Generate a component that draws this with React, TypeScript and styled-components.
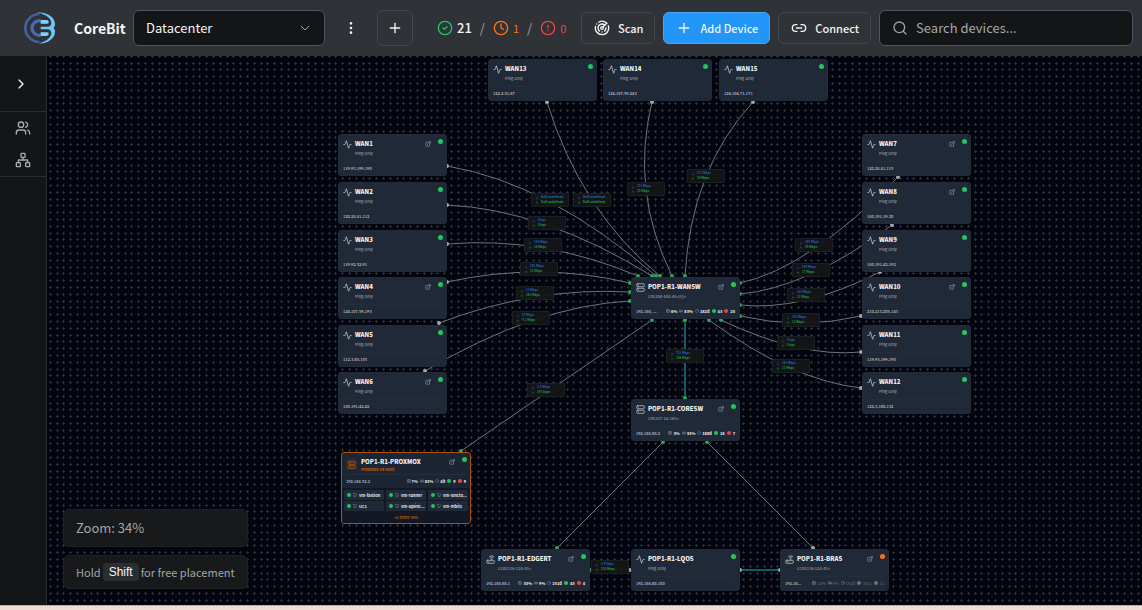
import React from 'react';
import styled, { createGlobalStyle, css } from 'styled-components';
import {
  Activity,
  ArrowDown,
  ArrowUp,
  ChevronDown,
  ChevronRight,
  CircleAlert,
  CircleCheck,
  Clock,
  Cpu,
  EllipsisVertical,
  ExternalLink,
  Link2,
  MemoryStick,
  Monitor,
  Network,
  Plus,
  Radar,
  Router,
  Search,
  Server,
  Users,
} from 'lucide-react';

const color = {
  bar: '#2f3237',
  panel: '#141517',
  line: '#42474d',
  field: '#4b5563',
  text: '#f4f4f5',
  muted: '#9ca3af',
  canvas: '#020510',
  card: '#1f2937',
  green: '#22c55e',
  orange: '#f97316',
  red: '#ef4444',
  blue: '#2196f8',
  down: '#2563c4',
  up: '#1b9e4b',
};

const GlobalStyle = createGlobalStyle`
  *, *::before, *::after { box-sizing: border-box; }
  body {
    margin: 0;
    background: #efdcd2;
    color: ${color.text};
    font-family: "Noto Sans CJK SC", "Noto Sans", sans-serif;
    font-size: 13px;
    line-height: 20px;
  }
  button, input, select { font: inherit; color: inherit; }
  p, h1, h2 { margin: 0; }
`;

/* ---------- page frame ---------- */

const Page = styled.div`
  display: flex;
  flex-direction: column;
  height: 100vh;
  padding-bottom: 4px;
`;

const TopBar = styled.header`
  display: flex;
  align-items: center;
  gap: 8px;
  height: 56px;
  flex: none;
  padding: 0 9px 0 24px;
  background: ${color.bar};
`;

const Brand = styled.div`
  display: flex;
  align-items: center;
  gap: 18px;
  width: 101px;
  flex: none;

  svg {
    flex: none;
  }
`;

const BrandName = styled.h1`
  font-size: 14px;
  line-height: 24px;
  font-weight: 700;
`;

const SelectBox = styled.label`
  display: flex;
  align-items: center;
  position: relative;
  width: 192px;
  height: 36px;
  flex: none;

  select {
    appearance: none;
    width: 100%;
    height: 100%;
    padding: 0 36px 0 12px;
    border: 1px solid ${color.field};
    border-radius: 6px;
    background: ${color.panel};
  }

  svg {
    position: absolute;
    right: 12px;
    color: ${color.muted};
    pointer-events: none;
  }
`;

const IconButton = styled.button<{ $outlined?: boolean }>`
  display: flex;
  align-items: center;
  justify-content: center;
  width: 36px;
  height: 36px;
  flex: none;
  padding: 0;
  border: 1px solid ${(p) => (p.$outlined ? color.line : 'transparent')};
  border-radius: 6px;
  background: transparent;
`;

const Counters = styled.div`
  display: flex;
  align-items: center;
  gap: 8px;
  width: 128px;
  margin: 0 8px 0 16px;
  flex: none;
  color: ${color.muted};
`;

const Counter = styled.span<{ $tone: string; $strong?: boolean }>`
  display: flex;
  align-items: center;
  gap: 4px;
  color: ${(p) => (p.$strong ? color.text : p.$tone)};
  font-size: ${(p) => (p.$strong ? 13 : 11)}px;
  font-weight: ${(p) => (p.$strong ? 500 : 400)};

  svg {
    color: ${(p) => p.$tone};
  }
`;

const ActionButton = styled.button<{ $primary?: boolean }>`
  display: flex;
  align-items: center;
  gap: 8px;
  height: 32px;
  flex: none;
  padding: 0 11px 0 12px;
  border: 1px solid ${(p) => (p.$primary ? '#48a9f9' : color.line)};
  border-radius: 6px;
  background: ${(p) => (p.$primary ? color.blue : 'transparent')};
  font-size: 11px;
  font-weight: 500;
`;

const SearchBox = styled.label`
  display: flex;
  align-items: center;
  gap: 8px;
  flex: 1;
  min-width: 0;
  height: 36px;
  padding: 0 12px;
  border: 1px solid ${color.field};
  border-radius: 6px;
  background: ${color.panel};
  color: ${color.muted};

  input {
    flex: 1;
    min-width: 0;
    padding: 0;
    border: 0;
    outline: 0;
    background: transparent;
  }
  input::placeholder {
    color: #a3a8ae;
    opacity: 1;
  }
`;

const Workspace = styled.div`
  display: flex;
  flex: 1;
  min-height: 0;
  border-bottom: 1px solid #b9aeab;
`;

const SideBar = styled.nav`
  display: flex;
  flex-direction: column;
  width: 47px;
  flex: none;
  border-right: 1px solid #2b2d30;
  background: ${color.panel};
`;

const SideGroup = styled.div`
  display: flex;
  flex-direction: column;
  align-items: center;
  border-bottom: 1px solid #2b2d30;
`;

const SideButton = styled.button<{ $tall?: boolean }>`
  display: flex;
  align-items: center;
  justify-content: center;
  width: 100%;
  height: ${(p) => (p.$tall ? 55 : 32)}px;
  padding: ${(p) => (p.$tall ? '0 5px 0 0' : 0)};
  border: 0;
  background: transparent;
  color: ${(p) => (p.$tall ? color.text : '#a9abae')};
`;

/* ---------- canvas ---------- */

const Canvas = styled.main`
  position: relative;
  flex: 1;
  min-width: 0;
  overflow: hidden;
  background: ${color.canvas};
`;

const Drawing = styled.svg`
  position: absolute;
  inset: 0;
  width: 100%;
  height: 100%;
`;

const Card = styled.article<{ $x: number; $y: number; $host?: boolean }>`
  position: absolute;
  left: ${(p) => p.$x}px;
  top: ${(p) => p.$y}px;
  display: flex;
  flex-direction: column;
  width: ${(p) => (p.$host ? 130 : 109)}px;
  border: 1px solid #232b36;
  border-radius: 3px;
  background: ${color.card};
  font-size: 4px;
  line-height: 6px;
  overflow: hidden;

  ${(p) =>
    p.$host &&
    css`
      border-color: #a8540c;
      background: #1c2533;
    `}
`;

const CardHead = styled.div<{ $host?: boolean }>`
  display: flex;
  gap: ${(p) => (p.$host ? 4 : 3)}px;
  height: ${(p) => (p.$host ? 21 : 26)}px;
  padding: 4px 15px 0 4px;
  color: #c9ccd1;
`;

const CardIcon = styled.span<{ $host?: boolean }>`
  display: flex;
  align-items: center;
  justify-content: center;
  width: ${(p) => (p.$host ? 11 : 9)}px;
  height: ${(p) => (p.$host ? 11 : 10)}px;
  flex: none;
  border-radius: 2px;
  margin-top: ${(p) => (p.$host ? 2 : 0)}px;
  background: ${(p) => (p.$host ? '#3a2a22' : 'transparent')};
  color: ${(p) => (p.$host ? '#c2600f' : 'inherit')};
`;

const CardNames = styled.div<{ $host?: boolean }>`
  flex: 1;
  min-width: 0;
  color: ${(p) => (p.$host ? '#c2600f' : '#b0b5be')};
  font-weight: ${(p) => (p.$host ? 700 : 400)};
`;

const CardTitle = styled.h2<{ $host?: boolean }>`
  margin-bottom: ${(p) => (p.$host ? 0 : 1)}px;
  color: ${color.text};
  font-size: 6px;
  line-height: ${(p) => (p.$host ? 9 : 10)}px;
  font-weight: 900;
  white-space: nowrap;
`;

const CardLink = styled.a`
  display: flex;
  align-items: center;
  height: 10px;
  color: #b4b8bf;
`;

const StatusDot = styled.span<{ $tone: string }>`
  position: absolute;
  top: 4px;
  right: 3px;
  width: 5px;
  height: 5px;
  border-radius: 50%;
  background: ${(p) => p.$tone};
`;

const CardFoot = styled.div`
  display: flex;
  align-items: center;
  justify-content: space-between;
  height: 14px;
  margin: 0 4px;
  padding-bottom: 2px;
  border-top: 1px solid #232e3b;
  color: #c0c4ca;
  font-weight: 500;
  white-space: nowrap;
`;

const Stats = styled.div<{ $dim?: boolean }>`
  display: flex;
  align-items: center;
  gap: 2px;
  color: ${(p) => (p.$dim ? '#6b7280' : '#f1f2f4')};
  font-weight: ${(p) => (p.$dim ? 400 : 700)};
`;

const Stat = styled.span`
  display: flex;
  align-items: center;
  gap: 1px;

  svg {
    color: #8b929d;
  }
`;

const Bullet = styled.i<{ $tone: string }>`
  width: 4px;
  height: 4px;
  flex: none;
  margin-right: 1px;
  border-radius: 50%;
  background: ${(p) => p.$tone};
`;

const VmArea = styled.div`
  padding: 2px 2px 3px;
  background: #131826;
  color: #c2600f;
  font-weight: 500;
  text-align: center;
`;

const VmGrid = styled.div`
  display: grid;
  grid-template-columns: repeat(3, minmax(0, 1fr));
  gap: 1px 2px;
  margin-bottom: 3px;
`;

const Vm = styled.span`
  display: flex;
  align-items: center;
  gap: 1px;
  height: 10px;
  padding: 0 3px;
  border-radius: 1px;
  background: #1f2937;
  color: #e5e7eb;
  font-weight: 700;
  white-space: nowrap;
  overflow: hidden;

  svg {
    flex: none;
    margin-right: 1px;
    color: #8b929d;
  }
`;

const RateTag = styled.div<{ $x: number; $y: number }>`
  position: absolute;
  left: ${(p) => p.$x}px;
  top: ${(p) => p.$y}px;
  display: flex;
  flex-direction: column;
  width: 38px;
  height: 14px;
  padding: 1px 3px;
  border: 1px solid #1d2022;
  border-radius: 1px;
  background: rgba(20, 21, 22, 0.94);
  font-size: 3px;
  line-height: 5px;
  font-weight: 700;
  transform: translate(-50%, -50%);
`;

const Rate = styled.span<{ $tone: string }>`
  display: flex;
  align-items: center;
  gap: 2px;
  color: ${(p) => p.$tone};
  white-space: nowrap;
`;

const Hints = styled.div`
  position: absolute;
  left: 16px;
  bottom: 16px;
  display: flex;
  flex-direction: column;
  gap: 8px;
`;

const Hint = styled.p<{ $small?: boolean }>`
  display: flex;
  align-items: center;
  gap: 2px;
  min-height: ${(p) => (p.$small ? 34 : 38)}px;
  padding: 0 12px;
  border: 1px solid #202224;
  border-radius: 6px;
  background: #18191a;
  color: #a3a6aa;
  font-size: ${(p) => (p.$small ? 11 : 13)}px;
`;

const Key = styled.kbd`
  padding: 0 6px;
  border-radius: 4px;
  background: #2a2d31;
  color: ${color.text};
  font-family: "Liberation Sans", sans-serif;
  font-size: 12px;
  line-height: 18px;
`;

/* ---------- data ---------- */

type Kind = 'ping' | 'switch' | 'router';

interface Device {
  name: string;
  x: number;
  y: number;
  ip: string;
  kind?: Kind;
  model?: string;
  link?: boolean;
  stats?: string[];
  ports?: [string, string];
  warn?: boolean;
}

const devices: Device[] = [
  { name: 'WAN13', x: 441, y: 3, ip: '122.2.51.67' },
  { name: 'WAN14', x: 556, y: 3, ip: '124.107.59.243' },
  { name: 'WAN15', x: 672, y: 3, ip: '124.104.71.171' },
  { name: 'WAN1', x: 291, y: 78, ip: '119.93.199.190', link: true },
  { name: 'WAN2', x: 291, y: 126, ip: '120.28.81.112' },
  { name: 'WAN3', x: 291, y: 174, ip: '119.92.52.91' },
  { name: 'WAN4', x: 291, y: 221, ip: '124.107.59.193', link: true },
  { name: 'WAN5', x: 291, y: 269, ip: '112.3.65.155' },
  { name: 'WAN6', x: 291, y: 316, ip: '180.191.42.42', link: true },
  { name: 'WAN7', x: 815, y: 78, ip: '120.28.81.115', link: true },
  { name: 'WAN8', x: 815, y: 126, ip: '180.191.19.30', link: true },
  { name: 'WAN9', x: 815, y: 174, ip: '180.191.42.192' },
  { name: 'WAN10', x: 815, y: 221, ip: '210.213.205.143', link: true },
  { name: 'WAN11', x: 815, y: 269, ip: '119.93.199.190' },
  { name: 'WAN12', x: 815, y: 316, ip: '122.3.160.132' },
  {
    name: 'POP1-R1-WANSW', x: 584, y: 221, ip: '192.168. ...', kind: 'switch',
    model: 'CRS354-48G-4S+2Q+', link: true, stats: ['6%', '83%', '182d'], ports: ['43', '20'],
  },
  {
    name: 'POP1-R1-CORESW', x: 584, y: 343, ip: '192.168.60.2', kind: 'switch',
    model: 'CRS317-1G-16S+', link: true, stats: ['3%', '33%', '188d'], ports: ['18', '7'],
  },
  {
    name: 'POP1-R1-EDGERT', x: 434, y: 493, ip: '192.168.60.1', kind: 'router',
    model: 'CCR2116-12G-4S+', link: true, stats: ['33%', '9%', '151d'], ports: ['43', '4'],
  },
  { name: 'POP1-R1-LQOS', x: 584, y: 493, ip: '192.168.60.100' },
  {
    name: 'POP1-R1-BRAS', x: 733, y: 493, ip: '192.16...', kind: 'router',
    model: 'CCR2116-12G-4S+', link: true, stats: ['33%', '9%', '151d'], ports: ['1011', '13'], warn: true,
  },
];

type Point = [number, number];

interface Edge {
  from: Point;
  to: Point;
  mid?: Point;
  fast?: boolean;
  ends?: [string, string];
}

const GREY = '#a4a6aa';
const GREEN = '#2fa35c';

const edges: Edge[] = [
  { from: [500, 46], to: [613, 220], mid: [545, 144] },
  { from: [605, 46], to: [625, 220], mid: [599, 134] },
  { from: [706, 46], to: [638, 220], mid: [658, 123] },
  { from: [400, 110], to: [609, 220], mid: [503, 146] },
  { from: [400, 149], to: [605, 220], mid: [500, 169] },
  { from: [400, 188], to: [591, 220], mid: [496, 192] },
  { from: [400, 226], to: [583, 227], mid: [492, 216] },
  { from: [392, 267], to: [583, 236], mid: [488, 241] },
  { from: [378, 315], to: [583, 245], mid: [484, 265] },
  { from: [851, 121], to: [693, 227], mid: [767, 193] },
  { from: [845, 169], to: [693, 238], mid: [764, 218] },
  { from: [833, 216], to: [693, 249], mid: [759, 244] },
  { from: [814, 260], to: [693, 260], mid: [754, 267] },
  { from: [814, 296], to: [674, 264], mid: [749, 291] },
  { from: [814, 332], to: [662, 264], mid: [741, 311] },
  { from: [414, 395], to: [605, 264], ends: [GREEN, GREEN] },
  { from: [638, 342], to: [638, 264], fast: true, ends: [GREEN, GREEN] },
  { from: [616, 386], to: [510, 492], ends: [GREEN, GREEN] },
  { from: [766, 492], to: [660, 386] },
  { from: [583, 514], to: [543, 514] },
  { from: [693, 514], to: [733, 514], fast: true, ends: [GREY, GREY] },
];

const rates: [number, number, string, string][] = [
  [503, 144, 'NaN undefined', 'NaN undefined'],
  [545, 144, 'NaN undefined', 'NaN undefined'],
  [599, 133, '211 Mbps', '25 Mbps'],
  [659, 120, '173 Mbps', '16 Mbps'],
  [500, 167, '0 bps', '0 bps'],
  [496, 189, '218 Mbps', '18 Mbps'],
  [492, 213, '281 Mbps', '33 Mbps'],
  [488, 237, '23 Mbps', '283 Mbps'],
  [484, 262, '57 Mbps', '4.2 Mbps'],
  [767, 189, '387 Mbps', '26 Mbps'],
  [764, 214, '294 Mbps', '17 Mbps'],
  [759, 239, '203 Mbps', '22 Mbps'],
  [754, 264, '341 Mbps', '11 Mbps'],
  [749, 287, '0 bps', '0 bps'],
  [744, 310, '283 Mbps', '21 Mbps'],
  [638, 300, '753 Mbps', '188 Mbps'],
  [499, 334, '1.5 Mbps', '167 kbps'],
  [563, 511, '3.4 Gbps', '216 Mbps'],
];

const vms = ['vm-fastion', 'vm-runner', 'vm-lxncto...', 'UC1', 'vm-uplinc...', 'vm-mbits'];

/* ---------- drawings ---------- */

function Logo() {
  return (
    <svg width="32" height="32" viewBox="0 0 96 96" fill="none" aria-hidden="true">
      <path d="M46 6A42 42 0 0 0 46 90" stroke="#46619f" strokeWidth="8" />
      <path d="M50 26H46A22 22 0 0 0 46 70H50" stroke="#4b68b0" strokeWidth="10" />
      <path d="M40 2C68 -1 93 16 93 36C93 42 91 46 88 48C91 50 93 54 93 60C93 80 68 97 44 94C64 90 82 78 82 64C82 57 78 52 71 52H50V44H71C78 44 82 39 82 32C82 18 64 6 40 2Z" fill="#6cc8f8" />
      <path d="M50 24H68C76 26 76 34 70 35H50ZM50 61H70C76 62 76 70 68 72H50Z" fill="#7fd2fb" />
    </svg>
  );
}

/* Five grid steps fill one 34px tile. */
const steps = [3, 10, 16, 23, 30];
const dotPath = steps
  .flatMap((y) => steps.map((x) => `M${x - 1} ${y}h3v1h-3zM${x} ${y - 1}h1v3h-1z`))
  .join('');

function curve({ from, to, mid }: Edge) {
  if (!mid) return `M${from} L${to}`;
  const control = [0, 1].map((i) => 2 * mid[i] - (from[i] + to[i]) / 2);
  return `M${from} Q${control} ${to}`;
}

function Links() {
  return (
    <Drawing aria-hidden="true">
      <defs>
        <pattern id="grid" width="34" height="34" patternUnits="userSpaceOnUse" y="-3">
          <path d={dotPath} fill="#2b2f33" />
        </pattern>
      </defs>
      <rect width="100%" height="100%" fill="url(#grid)" />
      {edges.map((e, i) => (
        <path key={i} d={curve(e)} fill="none" stroke={e.fast ? '#0f5f62' : '#6f7278'} strokeWidth={e.fast ? 2 : 1} />
      ))}
      {edges.map((e, i) => {
        const [a, b] = e.ends ?? [GREY, GREEN];
        return (
          <g key={i}>
            <circle cx={e.from[0]} cy={e.from[1]} r="2" fill={a} />
            <circle cx={e.to[0]} cy={e.to[1]} r="2" fill={b} />
          </g>
        );
      })}
    </Drawing>
  );
}

const kindIcon = { ping: Activity, switch: Server, router: Router };

function StatRow({ values, ports, dim }: { values: string[]; ports: [string, string]; dim?: boolean }) {
  const icons = [Cpu, MemoryStick, Clock];
  return (
    <Stats $dim={dim}>
      {values.map((v, i) => {
        const Icon = icons[i];
        return (
          <Stat key={i}>
            <Icon size={4} />
            {v}
          </Stat>
        );
      })}
      <Stat>
        <Bullet $tone={dim ? '#6b7280' : color.green} />
        {ports[0]}
      </Stat>
      <Stat>
        <Bullet $tone={dim ? '#6b7280' : color.red} />
        {ports[1]}
      </Stat>
    </Stats>
  );
}

function DeviceCard({ d }: { d: Device }) {
  const Icon = kindIcon[d.kind ?? 'ping'];
  return (
    <Card $x={d.x} $y={d.y}>
      <CardHead>
        <CardIcon>
          <Icon size={9} />
        </CardIcon>
        <CardNames>
          <CardTitle>{d.name}</CardTitle>
          <p>{d.model ?? 'Ping Only'}</p>
        </CardNames>
        {d.link && (
          <CardLink href="#" aria-label={`Open ${d.name}`}>
            <ExternalLink size={6} />
          </CardLink>
        )}
      </CardHead>
      <CardFoot>
        <span>{d.ip}</span>
        {d.stats && d.ports && <StatRow values={d.stats} ports={d.ports} dim={d.warn} />}
      </CardFoot>
      <StatusDot $tone={d.warn ? color.orange : color.green} />
    </Card>
  );
}

function HostCard() {
  return (
    <Card $x={294} $y={396} $host>
      <CardHead $host>
        <CardIcon $host>
          <Server size={8} />
        </CardIcon>
        <CardNames $host>
          <CardTitle $host>POP1-R1-PROXMOX</CardTitle>
          <p>Proxmox VE Host</p>
        </CardNames>
        <CardLink href="#" aria-label="Open POP1-R1-PROXMOX">
          <ExternalLink size={6} />
        </CardLink>
      </CardHead>
      <CardFoot>
        <span>192.168.52.2</span>
        <StatRow values={['7%', '83%', '4h']} ports={['9', '9']} />
      </CardFoot>
      <VmArea>
        <VmGrid>
          {vms.map((vm) => (
            <Vm key={vm}>
              <Bullet $tone={color.green} />
              <Monitor size={4} />
              {vm}
            </Vm>
          ))}
        </VmGrid>
        +8 more VMs
      </VmArea>
      <StatusDot $tone={color.green} />
    </Card>
  );
}

export default function App() {
  return (
    <>
      <GlobalStyle />
      <Page>
        <TopBar>
          <Brand>
            <Logo />
            <BrandName>CoreBit</BrandName>
          </Brand>
          <SelectBox>
            <select aria-label="Map" defaultValue="Datacenter">
              <option>Datacenter</option>
            </select>
            <ChevronDown size={16} strokeWidth={1.5} />
          </SelectBox>
          <IconButton aria-label="Map options">
            <EllipsisVertical size={16} />
          </IconButton>
          <IconButton $outlined aria-label="New map">
            <Plus size={16} />
          </IconButton>
          <Counters>
            <Counter $tone={color.green} $strong>
              <CircleCheck size={16} />
              21
            </Counter>
            /
            <Counter $tone={color.orange}>
              <Clock size={16} />
              1
            </Counter>
            /
            <Counter $tone={color.red}>
              <CircleAlert size={16} />
              0
            </Counter>
          </Counters>
          <ActionButton>
            <Radar size={16} />
            Scan
          </ActionButton>
          <ActionButton $primary>
            <Plus size={16} />
            Add Device
          </ActionButton>
          <ActionButton>
            <Link2 size={16} />
            Connect
          </ActionButton>
          <SearchBox>
            <Search size={16} />
            <input type="search" aria-label="Search devices" placeholder="Search devices..." />
          </SearchBox>
        </TopBar>
        <Workspace>
          <SideBar>
            <SideGroup>
              <SideButton $tall aria-label="Expand">
                <ChevronRight size={16} />
              </SideButton>
            </SideGroup>
            <SideGroup>
              <SideButton aria-label="Users">
                <Users size={16} />
              </SideButton>
              <SideButton aria-label="Network">
                <Network size={16} />
              </SideButton>
            </SideGroup>
          </SideBar>
          <Canvas>
            <Links />
            {rates.map(([x, y, down, up], i) => (
              <RateTag key={i} $x={x} $y={y}>
                <Rate $tone={color.down}>
                  <ArrowDown size={4} />
                  {down}
                </Rate>
                <Rate $tone={color.up}>
                  <ArrowUp size={4} />
                  {up}
                </Rate>
              </RateTag>
            ))}
            {devices.map((d) => (
              <DeviceCard key={d.name} d={d} />
            ))}
            <HostCard />
            <Hints>
              <Hint>Zoom: 34%</Hint>
              <Hint $small>
                Hold <Key>Shift</Key> for free placement
              </Hint>
            </Hints>
          </Canvas>
        </Workspace>
      </Page>
    </>
  );
}
